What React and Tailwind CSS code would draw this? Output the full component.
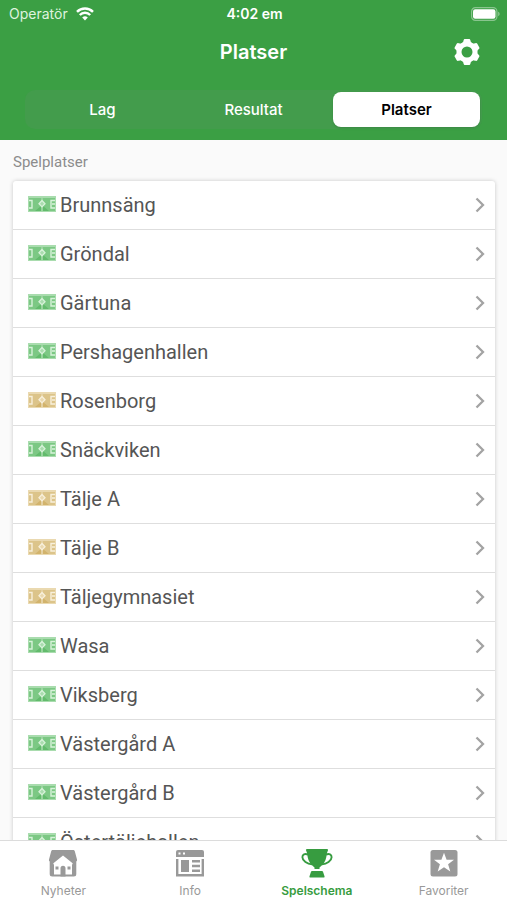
import React from "react";

const places = [
  ["Brunnsäng", "grass"],
  ["Gröndal", "grass"],
  ["Gärtuna", "grass"],
  ["Pershagenhallen", "grass"],
  ["Rosenborg", "indoor"],
  ["Snäckviken", "grass"],
  ["Tälje A", "indoor"],
  ["Tälje B", "indoor"],
  ["Täljegymnasiet", "indoor"],
  ["Wasa", "grass"],
  ["Viksberg", "grass"],
  ["Västergård A", "grass"],
  ["Västergård B", "grass"],
  ["Östertäljehallen", "grass"],
];

const courtColors = {
  grass: { edge: "#a9dcae", field: "#7cc884", dark: "#62bb6c", line: "#d8f2da" },
  indoor: { edge: "#ead9b0", field: "#dcc48a", dark: "#d2b36c", line: "#f8f0dc" },
};

function Court({ kind }) {
  const c = courtColors[kind];
  return (
    <svg className="h-[18px] w-7 shrink-0" viewBox="0 0 28 18" aria-hidden="true">
      <rect width="28" height="16" fill={c.edge} />
      <rect x="1" y="2" width="26" height="13" fill={c.field} />
      <path d="M7 15l6-5v5zM15 15v-5l6 5z" fill={c.dark} />
      <path d="M14 2v2.500M14 11v4" stroke={c.line} strokeWidth="0.600" />
      <path d="M14 4.500l3 3.200-3 3.200-3-3.200z" fill={c.edge} stroke={c.line} strokeWidth="1.300" />
      <path d="M1 4.500h3v7.500H1M27 4.500h-4v7.500h4M24 8h3" fill="none" stroke={c.line} strokeWidth="1.400" />
    </svg>
  );
}

function Wifi() {
  return (
    <svg className="h-[14px] w-[18px]" viewBox="0 0 18 14" fill="none" stroke="#fff" aria-hidden="true">
      <path d="M1 4.800a11.500 11.500 0 0 1 16 0" strokeWidth="2.500" />
      <path d="M3.800 8a7.200 7.200 0 0 1 10.400 0" strokeWidth="2.400" />
      <path d="M6.200 10.600a4 4 0 0 1 5.600 0L9 13.500z" fill="#fff" stroke="none" />
    </svg>
  );
}

function Battery() {
  return (
    <svg className="h-[14px] w-[29px]" viewBox="0 0 29 14" aria-hidden="true">
      <rect x="0.600" y="0.600" width="25.300" height="12.800" rx="3.800" fill="none" stroke="#fff" strokeOpacity="0.400" strokeWidth="1.200" />
      <rect x="2" y="2.200" width="22.500" height="9.600" rx="2.200" fill="#fff" />
      <path d="M27.300 4.800c1.600.6 1.600 3.800 0 4.400z" fill="#fff" fillOpacity="0.500" />
    </svg>
  );
}

function Gear() {
  return (
    <svg className="size-8" viewBox="0 0 32 32" aria-hidden="true">
      <circle cx="16" cy="16" r="8" fill="none" stroke="#fff" strokeWidth="5" />
      <g fill="#fff">
        <path id="gear-tooth" d="M11 7.200c.7-.3 1-.7 1.200-1.400l.4-1.500c.2-.9.700-1.300 1.500-1.300h3.800c.8 0 1.300.4 1.500 1.300l.4 1.500c.2.700.5 1.100 1.200 1.400l-1.500 2.800h-7z" />
        <use href="#gear-tooth" transform="rotate(60 16 16)" />
        <use href="#gear-tooth" transform="rotate(120 16 16)" />
        <use href="#gear-tooth" transform="rotate(180 16 16)" />
        <use href="#gear-tooth" transform="rotate(240 16 16)" />
        <use href="#gear-tooth" transform="rotate(300 16 16)" />
      </g>
    </svg>
  );
}

function House() {
  return (
    <svg className="h-8 w-8" viewBox="0 0 32 32" aria-hidden="true">
      <path d="M6 3h20c1 0 1.500.5 1.800 1.300L30 12.500c.3 1-.3 2-1.300 2H3.300c-1 0-1.600-1-1.300-2l2.200-8.200C4.500 3.500 5 3 6 3z" fill="currentColor" />
      <path d="M2.700 13h26.600v14a2.500 2.500 0 0 1-2.500 2.500H5.200A2.500 2.500 0 0 1 2.700 27z" fill="currentColor" />
      <path d="M16 8.500l9.300 7.500c.7.600.4 1.300-.3 1.500V27.500H7V17.500c-.7-.2-1-.9-.3-1.500z" fill="#fff" />
      <path d="M13.500 29.500v-8.300a2.500 2.500 0 0 1 5 0v8.300zM8.500 19.500h3v3h-3zM20.500 19.500h3v3h-3z" fill="currentColor" />
    </svg>
  );
}

function News() {
  return (
    <svg className="h-8 w-8" viewBox="0 0 32 32" aria-hidden="true">
      <path d="M4 3h24a2 2 0 0 1 2 2v5H2V5a2 2 0 0 1 2-2z" fill="currentColor" />
      <path d="M4.500 5.500h2v2h-2zM9 5.500h2v2H9z" fill="#fff" />
      <path d="M3.200 12v16.300h25.600V12" fill="none" stroke="currentColor" strokeWidth="2.400" />
      <path d="M7 13h8v12H7zM18 13h8v2.400h-8zM18 17.800h8v2.400h-8zM18 22.600h8V25h-8z" fill="currentColor" />
    </svg>
  );
}

function Trophy() {
  return (
    <svg className="h-8 w-8" viewBox="0 0 32 32" aria-hidden="true">
      <path d="M6 2h20c1 0 1.300.8.900 1.600C25.300 6.500 26 9.500 24.500 13c-1.500 3.500-3.800 5.800-6 7.500V22h-5v-1.500c-2.200-1.700-4.500-4-6-7.500C6 9.500 6.700 6.500 5.100 3.600 4.700 2.800 5 2 6 2z" fill="currentColor" />
      <path d="M7 7.700C3.800 6.200 1.300 7.600 1.400 10.200c.1 3.600 4.800 7 9.600 7.200M25 7.700c3.200-1.500 5.700-.1 5.600 2.500-.1 3.600-4.800 7-9.600 7.200" fill="none" stroke="currentColor" strokeWidth="1.900" />
      <path d="M11 24h10c.5 0 .8.300 1 .8l1.500 4.400c.2.700-.1 1.300-.8 1.300H9.300c-.7 0-1-.6-.8-1.300l1.500-4.400c.2-.5.500-.8 1-.8z" fill="currentColor" />
    </svg>
  );
}

function StarBox() {
  return (
    <svg className="h-8 w-8" viewBox="0 0 32 32" aria-hidden="true">
      <rect x="2.500" y="3" width="27" height="26.500" rx="2.500" fill="currentColor" />
      <path d="M16 5.800l2.600 7h7.400l-5.900 4.500 2.200 7.200-6.300-4.300-6.300 4.300 2.200-7.200L6 12.800h7.400z" fill="#fff" />
    </svg>
  );
}

const tabs = [
  ["Nyheter", House],
  ["Info", News],
  ["Spelschema", Trophy],
  ["Favoriter", StarBox],
];

export default function App() {
  return (
    <div className="flex h-screen flex-col overflow-hidden bg-[#fafafa] font-[Inter,sans-serif]">
      <header className="shrink-0 bg-[#3b9f44] text-white">
        <div className="grid h-7 grid-cols-3 items-center pr-[7px] pl-[9px] leading-4">
          <div className="flex items-center gap-2 text-[14px] text-[#dff3df]">
            <span>Operatör</span>
            <Wifi />
          </div>
          <span className="text-center text-[14px] font-semibold">4:02 em</span>
          <span className="flex justify-end">
            <Battery />
          </span>
        </div>
        <div className="grid h-12 grid-cols-[1fr_auto_1fr] items-center px-6">
          <h1 className="col-start-2 text-[20px] leading-6 font-semibold">Platser</h1>
          <button type="button" aria-label="Inställningar" className="justify-self-end">
            <Gear />
          </button>
        </div>
        <div className="px-[25px] pt-[14px] pb-[11px]">
          <div className="grid grid-cols-3 rounded-[10px] bg-[#439c4c] p-[2px] text-[15px] leading-5 font-medium">
            <button type="button" className="h-[35px]">Lag</button>
            <button type="button" className="h-[35px]">Resultat</button>
            <button type="button" aria-pressed="true" className="ml-1 h-[35px] rounded-lg bg-white font-semibold text-black shadow-sm">
              Platser
            </button>
          </div>
        </div>
      </header>

      <main className="min-h-0 flex-1 overflow-y-auto pr-3 pl-[13px] font-[Roboto,sans-serif] [scrollbar-width:none]">
        <h2 className="pt-3 pb-[9px] text-[15px] leading-5 text-[#8c8c8c]">Spelplatser</h2>
        <ul className="rounded-[3px] bg-white shadow-[0_0_4px_rgba(0,0,0,0.2)]">
          {places.map(([name, kind]) => (
            <li key={name} className="border-b border-[#dedede]">
              <button type="button" className="flex h-12 w-full items-center pr-[9px] pl-[15px] text-left">
                <Court kind={kind} />
                <span className="flex-1 pl-1 text-[20px] leading-6 text-[#555]">{name}</span>
                <svg className="h-4 w-3" viewBox="0 0 12 16" fill="none" stroke="#a3a3a3" strokeWidth="2.300" aria-hidden="true">
                  <path d="M2.500 1.500L9 8l-6.500 6.500" />
                </svg>
              </button>
            </li>
          ))}
        </ul>
      </main>

      <nav className="grid h-[60px] shrink-0 grid-cols-4 border-t border-[#dcdcdc] bg-white">
        {tabs.map(([label, Icon]) => (
          <a
            key={label}
            href="#"
            aria-current={label === "Spelschema" ? "page" : undefined}
            className="flex flex-col items-center pt-[6px] text-[12px] leading-4 text-[#999] aria-[current=page]:font-semibold aria-[current=page]:text-[#379c40]"
          >
            <Icon />
            <span className="pt-1">{label}</span>
          </a>
        ))}
      </nav>
    </div>
  );
}
